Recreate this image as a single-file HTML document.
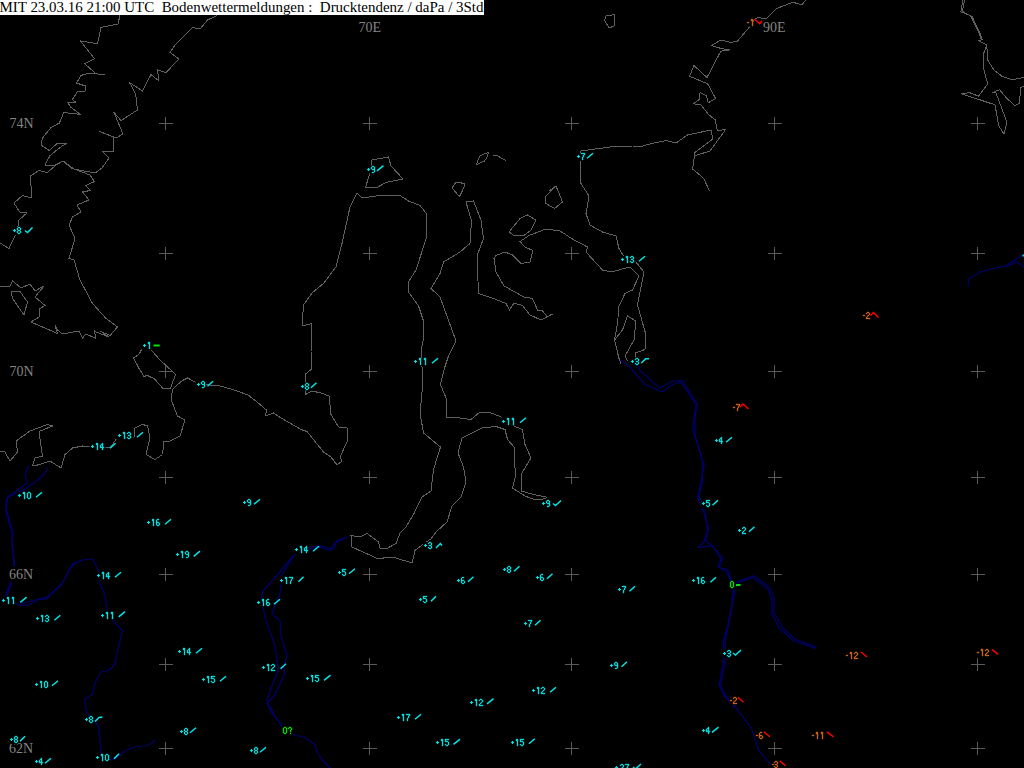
<!DOCTYPE html><html><head><meta charset="utf-8"><style>
html,body{margin:0;padding:0;background:#000;width:1024px;height:768px;overflow:hidden;}
#hdr{position:absolute;left:0;top:0;width:484px;height:15px;background:#fff;color:#000;font-family:"Liberation Serif",serif;font-size:14.96px;line-height:15px;white-space:pre;overflow:hidden;}
#hdr span{position:absolute;left:-0.5px;top:-0.2px;}
svg{position:absolute;left:0;top:0;}
.gl{font-family:"Liberation Serif",serif;font-size:14px;fill:#848484;}
.lb{font-family:"Liberation Sans",sans-serif;font-size:10px;}
</style></head><body>
<svg width="1024" height="768" viewBox="0 0 1024 768">
<defs><path id="g48" d="M1,0h2v1h-2zM0,1h1v1h-1zM3,1h1v1h-1zM0,2h1v1h-1zM3,2h1v1h-1zM0,3h1v1h-1zM3,3h1v1h-1zM0,4h1v1h-1zM3,4h1v1h-1zM0,5h1v1h-1zM3,5h1v1h-1zM1,6h2v1h-2z"/><path id="g49" d="M1,0h2v1h-2zM1,1h2v1h-2zM2,2h1v1h-1zM2,3h1v1h-1zM2,4h1v1h-1zM2,5h1v1h-1zM2,6h1v1h-1z"/><path id="g50" d="M1,0h2v1h-2zM0,1h1v1h-1zM3,1h1v1h-1zM3,2h1v1h-1zM2,3h1v1h-1zM1,4h1v1h-1zM0,5h1v1h-1zM0,6h4v1h-4z"/><path id="g51" d="M1,0h2v1h-2zM0,1h1v1h-1zM3,1h1v1h-1zM3,2h1v1h-1zM1,3h2v1h-2zM3,4h1v1h-1zM0,5h1v1h-1zM3,5h1v1h-1zM1,6h2v1h-2z"/><path id="g52" d="M2,0h1v1h-1zM1,1h2v1h-2zM0,2h1v1h-1zM2,2h1v1h-1zM0,3h1v1h-1zM2,3h1v1h-1zM0,4h4v1h-4zM2,5h1v1h-1zM2,6h1v1h-1z"/><path id="g53" d="M0,0h4v1h-4zM0,1h1v1h-1zM0,2h3v1h-3zM3,3h1v1h-1zM3,4h1v1h-1zM0,5h1v1h-1zM3,5h1v1h-1zM1,6h2v1h-2z"/><path id="g54" d="M1,0h2v1h-2zM0,1h1v1h-1zM0,2h1v1h-1zM0,3h3v1h-3zM0,4h1v1h-1zM3,4h1v1h-1zM0,5h1v1h-1zM3,5h1v1h-1zM1,6h2v1h-2z"/><path id="g55" d="M0,0h4v1h-4zM3,1h1v1h-1zM2,2h1v1h-1zM2,3h1v1h-1zM1,4h1v1h-1zM1,5h1v1h-1zM1,6h1v1h-1z"/><path id="g56" d="M1,0h2v1h-2zM0,1h1v1h-1zM3,1h1v1h-1zM0,2h1v1h-1zM3,2h1v1h-1zM1,3h2v1h-2zM0,4h1v1h-1zM3,4h1v1h-1zM0,5h1v1h-1zM3,5h1v1h-1zM1,6h2v1h-2z"/><path id="g57" d="M1,0h2v1h-2zM0,1h1v1h-1zM3,1h1v1h-1zM0,2h1v1h-1zM3,2h1v1h-1zM1,3h3v1h-3zM3,4h1v1h-1zM3,5h1v1h-1zM1,6h2v1h-2z"/><path id="g63" d="M1,0h2v1h-2zM0,1h1v1h-1zM3,1h1v1h-1zM3,2h1v1h-1zM2,3h1v1h-1zM2,4h1v1h-1zM2,6h1v1h-1z"/><path id="g43" d="M2,2h1v1h-1zM1,3h3v1h-3zM2,4h1v1h-1z"/><path id="g45" d="M0,3h2v1h-2z"/></defs>
<path d="M159,123.5h14M165.5,117v13M159,253.5h14M165.5,247v13M159,371.5h14M165.5,365v13M159,477.5h14M165.5,471v13M159,574.5h14M165.5,568v13M159,664.5h14M165.5,658v13M159,748.5h14M165.5,742v13M363,123.5h14M369.5,117v13M363,253.5h14M369.5,247v13M363,371.5h14M369.5,365v13M363,477.5h14M369.5,471v13M363,574.5h14M369.5,568v13M363,664.5h14M369.5,658v13M363,748.5h14M369.5,742v13M565,123.5h14M571.5,117v13M565,253.5h14M571.5,247v13M565,371.5h14M571.5,365v13M565,477.5h14M571.5,471v13M565,574.5h14M571.5,568v13M565,664.5h14M571.5,658v13M565,748.5h14M571.5,742v13M768,123.5h14M774.5,117v13M768,253.5h14M774.5,247v13M768,371.5h14M774.5,365v13M768,477.5h14M774.5,471v13M768,574.5h14M774.5,568v13M768,664.5h14M774.5,658v13M768,748.5h14M774.5,742v13M971,123.5h14M977.5,117v13M971,253.5h14M977.5,247v13M971,371.5h14M977.5,365v13M971,477.5h14M977.5,471v13M971,574.5h14M977.5,568v13M971,664.5h14M977.5,658v13M971,748.5h14M977.5,742v13" stroke="#5a5a5a" stroke-width="1" fill="none" shape-rendering="crispEdges"/>
<g fill="none" stroke="#00006c" stroke-width="1.25" stroke-linejoin="round">
<polyline points="28.75,465.6 25,474.4 27.5,483 16.25,491 13.75,493 7.5,497 5.6,503.75 6.25,512.5 9.4,523.75 11.9,531 12.5,546 14,565.5 10,584 6,594 3,600"/>
<polyline points="48,467.5 43.75,475 36.25,481 25,489.4 16.25,493 7.5,498 6.25,508.75 10.6,525 13,532.5 11.9,546 15,566 11,585 7,595"/>
<polyline points="15,603 20,605.5 29,605 40,599 46,599 62.5,583 72.5,564 82.5,560 92.5,559 99,572 100,584 105,595.5 107.5,612 114,622 122.5,630.5 116,658 115,664 109,670.5 101,672 95,683 92.5,694 85,699 86,709.5 90,718 99,726 100,742 101,752 105,758 114,759.5 125,751 136,746.5 146,746 152.5,743 154.5,739.5"/>
<polyline points="20,604 47,597 61,585.5 69,570.5 75,563 82.5,560"/>
<polyline points="347,537 335,543 331,549 320,545.5 310,547 295,554 286,568 280,578 281,590.5 276,603 272,614 280,620.5 281,635.5 287,655.5 283.5,668 285,673 276,693 267,704 271,708 275,716 282,726 293.5,734.5 306,738 315,744.5 317,752 322,759.5 330,768"/>
<polyline points="347,537 337,540.5 335,547 330,550.5 318.5,547 296,553 285,565.5 280,572 263.5,590.5 261,599 266,620.5 275,645.5 278.5,670.5 271,688 267,700.5 270,710 276,718 283,727"/>
<polyline points="620,359.5 630,367 637.5,376 645,384.5 662.5,392 672.5,384.5 681,382 696,404.5 692.5,429.5 702.5,459.5 702.5,482 699,496 701,504 705,512 707.5,529.5 704,542 698,547.6 712.3,545.75 722.6,558 719,567.3 728,570 732,581.4 735,591 730,617 725.4,639.5 724.75,665 720.5,685 726,696 736,707.5 751,727.5 754.75,737.5 758.5,750 771,765 774,768"/>
<polyline points="637.5,362 640,370.75 647.5,377 652.5,382 660,388 672.5,381 682.5,380.75 697.5,404.5 695,418 695,434.5 704,466 700,487 697.5,497 703,510 708.5,528 706,541 713.5,547 721,559 718,567 727,572 731,582"/>
<polyline points="731.5,582 733,590 732,605 727.25,628 723.5,640 723,665 719,685 724.5,696 734.5,707.5"/>
<polyline points="735.75,582 753.6,575.75 769.5,587 774,598 774,613 782.6,628 795.75,639.5 816.4,647.4"/>
<polyline points="735.75,583.5 753,577.5 768,589 772,600 772,614 780,629 794,641 816,648.5"/>
<polyline points="968,286 969,278.5 980.5,272 993,268.5 1005.5,266 1022,255.5 1024,255"/>
<polyline points="1005.5,267 1017,262 1024,267"/>
</g>
<g fill="none" stroke="#606060" stroke-width="1" stroke-linejoin="round" shape-rendering="crispEdges">
<polyline points="120,15 118,24 101,27.5 97.5,43.75 80.5,41 94.5,58.75 84.75,63.75 96,73.75 105,74.75"/>
<polyline points="96,73.75 89,73 81,75.5 76.5,83 85.5,86 85,91 77.5,91.5 72.5,99.4 76,102.5 67.5,102.5 71,107.5 80.6,114.4 63.75,112.5 59.4,123 50.6,128 42.5,138 41,145 49.4,150.6 57.5,143 67,143 60,147.5 50,155.6 45,165 55,165 63,161 72.5,168.75 95,173 102,168 109,158 102,151 114,151 113,137 98.75,131 116,138 123,134 113.75,112 121,120.6 137.5,110 135.6,93.75 129.5,82.5 142.5,91 151,74.5 159,81 157.5,70 166,72.5 179,59 170,52.5 175,45 192.5,27.5 200,29 207.5,20 217,15.5"/>
<polyline points="63,161 56,165 47.5,172.5 38.75,170.6 30.6,176 31,186 31,198 22.5,195.5 14,203 19.5,212 27,213 19,220 18,226 15,236 9,248.5 0,243"/>
<polyline points="63,161 74,169 90,175 94.5,181.5 86,185.5 90,190.5 82.5,192 89,200 77,205 81,212 72.5,217 69,225 75,238.5 69,258.5 74,260 80,280 92.5,303.5 106,318.5 117.5,327 110,335.5 101,331.5 109,337 96,332 94,330 96,338.5 86,334 82.5,338 79,331 62.5,334 57.5,330 55,325 57.5,333.5 31,322 39,317 40,308.5 45,305.5 35,297 44,286 35,291 30,284 21,288 12.5,281 10,286 0,286"/>
<polyline points="11,291.5 20,291.5 27.5,302 24,315 12.5,298.5 11,291.5"/>
<polyline points="151,349.75 160,360 175.6,374.4 170.6,388 162.5,388 154.4,378.75 146.25,375 144.4,377 138.75,368 133.5,357.75 138.75,354.75 141.9,349"/>
<polyline points="256,401 248,395 232.5,389.4 220,386 210,385 195,382 187.5,378 181.25,381.25 172.5,389.4 171.25,400 177.5,416 185,420 180,436 170,441 164,441 162.5,454.5 155,459.5 146,454.5 150,438 147.5,425.75 142.5,424.5 135,428 134,437 116,439.5 110,448 82.5,446 72.5,448 65,454.5 61,468 50,461 40,464.5 32.5,466 35,458 42.5,456 39,431.5 52.5,426 47.5,424.5 30,431 16,441 17.5,452 10,461 5,452 0,451"/>
<polyline points="256,401 267,410.5 265,416 273.5,413 281,418 301,429.5 307,431.5 323.5,452 331,457 337,465 342,461 340,457 347,442 347,428 338.5,427 331,414.5 329,396 321,393 312,391 305.5,394.5 305,384.5 305,374.5 311,369.5 311,352 312,323.5 302,326 303.5,305 312,293 323.5,283.5 336,267 342,243.5 350,207 357,193 362,198 376,196 400,195.5 408.5,201 420,205.5 426,213 427,236 416,270 409,281 408.5,292 418.5,306 423.5,321 424,336 421,351 423,382 420,413 423.5,433 440.5,447 433.5,469.5 431,491 422,497 413.5,514.5 406,527 400,533 396,543.5 386,549 380,548 378.5,542 367,533.5 360,537 351,535.5 352,547 378.5,559 386,557.5 396,558 412,563 415,550.5 426,542 431,539 436,532 447,522 452,506 461,497 466,482 463.5,467 458,453 462,438 482,428 496,426.5 505,429.5 507.5,439.5 515,448 514,462 516,474.5 512.5,488 525,496 534,499.5 540,500 547.5,497.5"/>
<polyline points="546,497 534,494.5 521,491 521,474.5 531,458 525,444.5 522.5,429.5 515,426.5 500,416.5 490,412.5 480,412 471,419.5 456,417.5 446,418 446,398 440.5,384.5 444.5,368 448.5,356 456,341 440,297 431,288.5 440,273.5 443.5,262 460,252 470,243.5 471.5,221 466,202 473.5,201 481,220 483.5,238.5 477,256 478.5,293.5 493.5,298.5 506,303.5 509.5,310 514,303 522.5,305.5 530,315 541,320 552.5,314"/>
<polyline points="547.5,317 542.5,311 537.5,310 532.5,298.5 524,297 504,286 496,272 494,258.5 496,255.5 505,252 512.5,255 521,263.5 530,262 533,250.5 525,247 520,241.5 529,235.5 546,229 560,231 574,240 587.5,247 586,252 602.5,270 611,272 630,267 639,276 632.5,290 625,293.5 619,306 617.5,323.5 614.5,340 619,358.5 621,364"/>
<polyline points="614.5,340 622.5,330 627.5,316 636,321 634,340 625,356 627.5,361"/>
<polyline points="372,160 388.5,157 391,166 403,179 386,182.5 376,188 365.5,187.5 370,172.5 372,160"/>
<polyline points="476.3,164.6 479.8,156 483.75,154 488.4,152.5 486.9,157.6 484.5,161 476.3,164.6"/>
<polyline points="492.7,155.2 496.25,155.2 505.6,160.5"/>
<polyline points="452.1,188 456,182.2 464.2,183.4 464.6,186.1 459.5,196.6 452.1,188"/>
<polyline points="509,232 520,218.5 527.5,215 536,220 531,230 524,235.5 514,235.5 509,232"/>
<polyline points="545,197 556,186 562.5,202 554.5,208.5 546,203.5 545,197"/>
<polyline points="606,16 615,14.5 614,26 609,28 604.5,20 606,16"/>
<polyline points="549,191 556,186"/>
<polyline points="635.5,358 635.5,353 645,349.5 646,335 637.5,305 644,272 635,261 625,258.5 619,248.5 616,236 602.5,232 590,225 586,213.5 589,196 581,183.5 580,176 580,160 581,151 610,147 632.5,146 640,147 647.5,144.5 666,140.5 676,143 687.5,135 711,130 713,139 695,152.5 692.5,169 701,176 704,179 709.5,191"/>
<polyline points="694,156 710,151 726,129 717.5,131 715,119.5 709,115 701,105 693.7,103.7 699.3,99.5 700,92.7 706.2,95.4 708.3,102.7 715.6,98.5 707.6,83.75 689.5,76.25 694,65.6 707,77.5 720.75,51.25 729.5,50 722,48.75 711.4,45.6 720.75,40 730.75,42.5 737.6,41 749.5,27 754.5,19.4 758,17.5 766,18.75 776,8.75 793,2.25 802,5 805.5,0"/>
<polyline points="963,0 960.8,11.8 964,13 970.4,15.5 978.6,31.9 981.4,40 978.6,40.5 986.8,45.2 983.2,54.7 983.2,67.4 987.7,83.8 978.6,96.2 969.5,92.6 961.3,93.8 971.3,97 995,104.8 998.7,125.7 1004,134 1006.9,122 996,93 992.3,92.6 999.6,89.7 1006.9,98.4 1015,105.7 1019.6,103 1020.5,87.5 1024,86.6"/>
<polyline points="964.5,0 962.5,11 966,13.5 972,16.5 980,33 982.5,40"/>
<polyline points="986.8,45.2 987.7,60 994,70 1002.3,76.5 1012.3,79.8 1024,77.4"/>
</g>
<rect x="9.0" y="115.5" width="25" height="15.5" fill="#000"/>
<text class="gl" x="9.5" y="128">74N</text>
<rect x="9.0" y="363.5" width="25" height="15.5" fill="#000"/>
<text class="gl" x="9.5" y="376">70N</text>
<rect x="8.5" y="566.5" width="25" height="15.5" fill="#000"/>
<text class="gl" x="9" y="579">66N</text>
<rect x="8.5" y="740.5" width="25" height="15.5" fill="#000"/>
<text class="gl" x="9" y="753">62N</text>
<rect x="358.0" y="19.5" width="25" height="15.5" fill="#000"/>
<text class="gl" x="358.5" y="32">70E</text>
<rect x="762.5" y="19.5" width="25" height="15.5" fill="#000"/>
<text class="gl" x="763" y="32">90E</text>
<rect x="12.0" y="227" width="11.0" height="8" fill="#000"/>
<use href="#g43" x="12" y="227" fill="#00e0e0" stroke="#00e0e0" stroke-width="0.15"/>
<use href="#g56" x="17" y="227" fill="#00e0e0" stroke="#00e0e0" stroke-width="0.35"/>
<path d="M25,230.5 L27.5,232.5 L32.5,227.5" stroke="#00e8e8" stroke-width="1.5" fill="none"/>
<rect x="141.5" y="341.5" width="9.5" height="8" fill="#000"/>
<use href="#g43" x="142" y="342" fill="#00e0e0" stroke="#00e0e0" stroke-width="0.15"/>
<use href="#g49" x="147" y="342" fill="#00e0e0" stroke="#00e0e0" stroke-width="0.35"/>
<path d="M153.5,345.5 L159.75,345.5" stroke="#00e000" stroke-width="2" fill="none"/>
<rect x="195.5" y="381" width="10.599999999999994" height="8" fill="#000"/>
<use href="#g43" x="196" y="381" fill="#00e0e0" stroke="#00e0e0" stroke-width="0.15"/>
<use href="#g57" x="201" y="381" fill="#00e0e0" stroke="#00e0e0" stroke-width="0.35"/>
<path d="M207.5,386.3 L213,381.2" stroke="#00e8e8" stroke-width="1.5" fill="none"/>
<rect x="116.5" y="432" width="17" height="8" fill="#000"/>
<use href="#g43" x="117" y="432" fill="#00e0e0" stroke="#00e0e0" stroke-width="0.15"/>
<use href="#g49" x="122" y="432" fill="#00e0e0" stroke="#00e0e0" stroke-width="0.35"/>
<use href="#g51" x="127" y="432" fill="#00e0e0" stroke="#00e0e0" stroke-width="0.35"/>
<path d="M137,437.3 L143,432.2" stroke="#00e8e8" stroke-width="1.5" fill="none"/>
<rect x="89.5" y="443" width="16" height="8" fill="#000"/>
<use href="#g43" x="90" y="443" fill="#00e0e0" stroke="#00e0e0" stroke-width="0.15"/>
<use href="#g49" x="95" y="443" fill="#00e0e0" stroke="#00e0e0" stroke-width="0.35"/>
<use href="#g52" x="100" y="443" fill="#00e0e0" stroke="#00e0e0" stroke-width="0.35"/>
<path d="M110,448.3 L115.5,443.2" stroke="#00e8e8" stroke-width="1.5" fill="none"/>
<rect x="16.5" y="492" width="15" height="8" fill="#000"/>
<use href="#g43" x="17" y="492" fill="#00e0e0" stroke="#00e0e0" stroke-width="0.15"/>
<use href="#g49" x="22" y="492" fill="#00e0e0" stroke="#00e0e0" stroke-width="0.35"/>
<use href="#g48" x="27" y="492" fill="#00e0e0" stroke="#00e0e0" stroke-width="0.35"/>
<path d="M36,497.3 L42,492.2" stroke="#00e8e8" stroke-width="1.5" fill="none"/>
<rect x="241.5" y="499" width="11" height="8" fill="#000"/>
<use href="#g43" x="242" y="499" fill="#00e0e0" stroke="#00e0e0" stroke-width="0.15"/>
<use href="#g57" x="247" y="499" fill="#00e0e0" stroke="#00e0e0" stroke-width="0.35"/>
<path d="M254,504.3 L260,499.2" stroke="#00e8e8" stroke-width="1.5" fill="none"/>
<rect x="145.5" y="519" width="15" height="8" fill="#000"/>
<use href="#g43" x="146" y="519" fill="#00e0e0" stroke="#00e0e0" stroke-width="0.15"/>
<use href="#g49" x="151" y="519" fill="#00e0e0" stroke="#00e0e0" stroke-width="0.35"/>
<use href="#g54" x="156" y="519" fill="#00e0e0" stroke="#00e0e0" stroke-width="0.35"/>
<path d="M165,524.3 L171,519.2" stroke="#00e8e8" stroke-width="1.5" fill="none"/>
<rect x="174.5" y="551" width="15" height="8" fill="#000"/>
<use href="#g43" x="175" y="551" fill="#00e0e0" stroke="#00e0e0" stroke-width="0.15"/>
<use href="#g49" x="180" y="551" fill="#00e0e0" stroke="#00e0e0" stroke-width="0.35"/>
<use href="#g57" x="185" y="551" fill="#00e0e0" stroke="#00e0e0" stroke-width="0.35"/>
<path d="M193.75,556.3 L200,551.2" stroke="#00e8e8" stroke-width="1.5" fill="none"/>
<rect x="95.5" y="572" width="15" height="8" fill="#000"/>
<use href="#g43" x="96" y="572" fill="#00e0e0" stroke="#00e0e0" stroke-width="0.15"/>
<use href="#g49" x="101" y="572" fill="#00e0e0" stroke="#00e0e0" stroke-width="0.35"/>
<use href="#g52" x="106" y="572" fill="#00e0e0" stroke="#00e0e0" stroke-width="0.35"/>
<path d="M115,577.3 L121,572.2" stroke="#00e8e8" stroke-width="1.5" fill="none"/>
<rect x="1.0" y="597" width="13.9" height="8" fill="#000"/>
<use href="#g43" x="1" y="597" fill="#00e0e0" stroke="#00e0e0" stroke-width="0.15"/>
<use href="#g49" x="6" y="597" fill="#00e0e0" stroke="#00e0e0" stroke-width="0.35"/>
<use href="#g49" x="11" y="597" fill="#00e0e0" stroke="#00e0e0" stroke-width="0.35"/>
<path d="M20.3,602.3 L26.6,597.2" stroke="#00e8e8" stroke-width="1.5" fill="none"/>
<rect x="35.1" y="615" width="15.399999999999999" height="8" fill="#000"/>
<use href="#g43" x="35" y="615" fill="#00e0e0" stroke="#00e0e0" stroke-width="0.15"/>
<use href="#g49" x="40" y="615" fill="#00e0e0" stroke="#00e0e0" stroke-width="0.35"/>
<use href="#g51" x="45" y="615" fill="#00e0e0" stroke="#00e0e0" stroke-width="0.35"/>
<path d="M54.4,620.3 L60.3,615.2" stroke="#00e8e8" stroke-width="1.5" fill="none"/>
<rect x="99.5" y="611.5" width="15" height="8" fill="#000"/>
<use href="#g43" x="100" y="612" fill="#00e0e0" stroke="#00e0e0" stroke-width="0.15"/>
<use href="#g49" x="105" y="612" fill="#00e0e0" stroke="#00e0e0" stroke-width="0.35"/>
<use href="#g49" x="110" y="612" fill="#00e0e0" stroke="#00e0e0" stroke-width="0.35"/>
<path d="M118.75,616.8 L125,611.7" stroke="#00e8e8" stroke-width="1.5" fill="none"/>
<rect x="176.5" y="648" width="15" height="8" fill="#000"/>
<use href="#g43" x="177" y="648" fill="#00e0e0" stroke="#00e0e0" stroke-width="0.15"/>
<use href="#g49" x="182" y="648" fill="#00e0e0" stroke="#00e0e0" stroke-width="0.35"/>
<use href="#g52" x="187" y="648" fill="#00e0e0" stroke="#00e0e0" stroke-width="0.35"/>
<path d="M196,653.3 L202,648.2" stroke="#00e8e8" stroke-width="1.5" fill="none"/>
<rect x="200.5" y="676" width="15" height="8" fill="#000"/>
<use href="#g43" x="201" y="676" fill="#00e0e0" stroke="#00e0e0" stroke-width="0.15"/>
<use href="#g49" x="206" y="676" fill="#00e0e0" stroke="#00e0e0" stroke-width="0.35"/>
<use href="#g53" x="211" y="676" fill="#00e0e0" stroke="#00e0e0" stroke-width="0.35"/>
<path d="M220,681.3 L226,676.2" stroke="#00e8e8" stroke-width="1.5" fill="none"/>
<rect x="33.5" y="680.5" width="14.5" height="8" fill="#000"/>
<use href="#g43" x="34" y="681" fill="#00e0e0" stroke="#00e0e0" stroke-width="0.15"/>
<use href="#g49" x="39" y="681" fill="#00e0e0" stroke="#00e0e0" stroke-width="0.35"/>
<use href="#g48" x="44" y="681" fill="#00e0e0" stroke="#00e0e0" stroke-width="0.35"/>
<path d="M52,685.8 L58,680.7" stroke="#00e8e8" stroke-width="1.5" fill="none"/>
<rect x="83.5" y="716" width="11" height="8" fill="#000"/>
<use href="#g43" x="84" y="716" fill="#00e0e0" stroke="#00e0e0" stroke-width="0.15"/>
<use href="#g56" x="89" y="716" fill="#00e0e0" stroke="#00e0e0" stroke-width="0.35"/>
<path d="M95,721.5 L99.35,717.3 L102.5,717.3" stroke="#00e8e8" stroke-width="1.5" fill="none"/>
<rect x="8.5" y="736" width="9.5" height="8" fill="#000"/>
<use href="#g43" x="9" y="736" fill="#00e0e0" stroke="#00e0e0" stroke-width="0.15"/>
<use href="#g56" x="14" y="736" fill="#00e0e0" stroke="#00e0e0" stroke-width="0.35"/>
<path d="M20,741.3 L25,736.2" stroke="#00e8e8" stroke-width="1.5" fill="none"/>
<rect x="33.5" y="758" width="9.5" height="8" fill="#000"/>
<use href="#g43" x="34" y="758" fill="#00e0e0" stroke="#00e0e0" stroke-width="0.15"/>
<use href="#g52" x="39" y="758" fill="#00e0e0" stroke="#00e0e0" stroke-width="0.35"/>
<path d="M45,763.3 L51,758.2" stroke="#00e8e8" stroke-width="1.5" fill="none"/>
<rect x="94.5" y="753.5" width="15" height="8" fill="#000"/>
<use href="#g43" x="95" y="754" fill="#00e0e0" stroke="#00e0e0" stroke-width="0.15"/>
<use href="#g49" x="100" y="754" fill="#00e0e0" stroke="#00e0e0" stroke-width="0.35"/>
<use href="#g48" x="105" y="754" fill="#00e0e0" stroke="#00e0e0" stroke-width="0.35"/>
<path d="M114,758.8 L119,753.7" stroke="#00e8e8" stroke-width="1.5" fill="none"/>
<rect x="178.5" y="727.5" width="9.5" height="8" fill="#000"/>
<use href="#g43" x="179" y="728" fill="#00e0e0" stroke="#00e0e0" stroke-width="0.15"/>
<use href="#g56" x="184" y="728" fill="#00e0e0" stroke="#00e0e0" stroke-width="0.35"/>
<path d="M190,732.8 L196,727.7" stroke="#00e8e8" stroke-width="1.5" fill="none"/>
<rect x="248.5" y="747" width="10" height="8" fill="#000"/>
<use href="#g43" x="249" y="747" fill="#00e0e0" stroke="#00e0e0" stroke-width="0.15"/>
<use href="#g56" x="254" y="747" fill="#00e0e0" stroke="#00e0e0" stroke-width="0.35"/>
<path d="M260,752.3 L266,747.2" stroke="#00e8e8" stroke-width="1.5" fill="none"/>
<rect x="365.5" y="165.5" width="10" height="8" fill="#000"/>
<use href="#g43" x="366" y="166" fill="#00e0e0" stroke="#00e0e0" stroke-width="0.15"/>
<use href="#g57" x="371" y="166" fill="#00e0e0" stroke="#00e0e0" stroke-width="0.35"/>
<path d="M377,170.8 L383.5,165.7" stroke="#00e8e8" stroke-width="1.5" fill="none"/>
<rect x="412.5" y="358" width="14" height="8" fill="#000"/>
<use href="#g43" x="413" y="358" fill="#00e0e0" stroke="#00e0e0" stroke-width="0.15"/>
<use href="#g49" x="418" y="358" fill="#00e0e0" stroke="#00e0e0" stroke-width="0.35"/>
<use href="#g49" x="423" y="358" fill="#00e0e0" stroke="#00e0e0" stroke-width="0.35"/>
<path d="M432,363.3 L438,358.2" stroke="#00e8e8" stroke-width="1.5" fill="none"/>
<rect x="299.5" y="382.5" width="9.5" height="8" fill="#000"/>
<use href="#g43" x="300" y="383" fill="#00e0e0" stroke="#00e0e0" stroke-width="0.15"/>
<use href="#g56" x="305" y="383" fill="#00e0e0" stroke="#00e0e0" stroke-width="0.35"/>
<path d="M311,387.8 L316.5,382.7" stroke="#00e8e8" stroke-width="1.5" fill="none"/>
<rect x="500.5" y="417.5" width="15" height="8" fill="#000"/>
<use href="#g43" x="501" y="418" fill="#00e0e0" stroke="#00e0e0" stroke-width="0.15"/>
<use href="#g49" x="506" y="418" fill="#00e0e0" stroke="#00e0e0" stroke-width="0.35"/>
<use href="#g49" x="511" y="418" fill="#00e0e0" stroke="#00e0e0" stroke-width="0.35"/>
<path d="M520,422.8 L526,417.7" stroke="#00e8e8" stroke-width="1.5" fill="none"/>
<rect x="423.0" y="542" width="9.5" height="8" fill="#000"/>
<use href="#g43" x="423" y="542" fill="#00e0e0" stroke="#00e0e0" stroke-width="0.15"/>
<use href="#g51" x="428" y="542" fill="#00e0e0" stroke="#00e0e0" stroke-width="0.35"/>
<path d="M436,548 L440.32,543.5 L442,545.5" stroke="#00e8e8" stroke-width="1.5" fill="none"/>
<rect x="293.9" y="546" width="14.400000000000034" height="8" fill="#000"/>
<use href="#g43" x="294" y="546" fill="#00e0e0" stroke="#00e0e0" stroke-width="0.15"/>
<use href="#g49" x="299" y="546" fill="#00e0e0" stroke="#00e0e0" stroke-width="0.35"/>
<use href="#g52" x="304" y="546" fill="#00e0e0" stroke="#00e0e0" stroke-width="0.35"/>
<path d="M313,551.3 L319,546.2" stroke="#00e8e8" stroke-width="1.5" fill="none"/>
<rect x="278.5" y="576.5" width="15.5" height="8" fill="#000"/>
<use href="#g43" x="279" y="577" fill="#00e0e0" stroke="#00e0e0" stroke-width="0.15"/>
<use href="#g49" x="284" y="577" fill="#00e0e0" stroke="#00e0e0" stroke-width="0.35"/>
<use href="#g55" x="289" y="577" fill="#00e0e0" stroke="#00e0e0" stroke-width="0.35"/>
<path d="M298.5,581.8 L303.5,576.7" stroke="#00e8e8" stroke-width="1.5" fill="none"/>
<rect x="255.5" y="599" width="15" height="8" fill="#000"/>
<use href="#g43" x="256" y="599" fill="#00e0e0" stroke="#00e0e0" stroke-width="0.15"/>
<use href="#g49" x="261" y="599" fill="#00e0e0" stroke="#00e0e0" stroke-width="0.35"/>
<use href="#g54" x="266" y="599" fill="#00e0e0" stroke="#00e0e0" stroke-width="0.35"/>
<path d="M274,604.3 L280,599.2" stroke="#00e8e8" stroke-width="1.5" fill="none"/>
<rect x="336.5" y="568.5" width="10" height="8" fill="#000"/>
<use href="#g43" x="337" y="569" fill="#00e0e0" stroke="#00e0e0" stroke-width="0.15"/>
<use href="#g53" x="342" y="569" fill="#00e0e0" stroke="#00e0e0" stroke-width="0.35"/>
<path d="M349,573.8 L355,568.7" stroke="#00e8e8" stroke-width="1.5" fill="none"/>
<rect x="455.5" y="576.5" width="10" height="8" fill="#000"/>
<use href="#g43" x="456" y="577" fill="#00e0e0" stroke="#00e0e0" stroke-width="0.15"/>
<use href="#g54" x="461" y="577" fill="#00e0e0" stroke="#00e0e0" stroke-width="0.35"/>
<path d="M468,581.8 L473.5,576.7" stroke="#00e8e8" stroke-width="1.5" fill="none"/>
<rect x="418.0" y="596" width="11.0" height="8" fill="#000"/>
<use href="#g43" x="418" y="596" fill="#00e0e0" stroke="#00e0e0" stroke-width="0.15"/>
<use href="#g53" x="423" y="596" fill="#00e0e0" stroke="#00e0e0" stroke-width="0.35"/>
<path d="M431,601.3 L436,596.2" stroke="#00e8e8" stroke-width="1.5" fill="none"/>
<rect x="501.5" y="566" width="10" height="8" fill="#000"/>
<use href="#g43" x="502" y="566" fill="#00e0e0" stroke="#00e0e0" stroke-width="0.15"/>
<use href="#g56" x="507" y="566" fill="#00e0e0" stroke="#00e0e0" stroke-width="0.35"/>
<path d="M514,571.3 L519.5,566.2" stroke="#00e8e8" stroke-width="1.5" fill="none"/>
<rect x="260.5" y="663.5" width="15.5" height="8" fill="#000"/>
<use href="#g43" x="261" y="664" fill="#00e0e0" stroke="#00e0e0" stroke-width="0.15"/>
<use href="#g49" x="266" y="664" fill="#00e0e0" stroke="#00e0e0" stroke-width="0.35"/>
<use href="#g50" x="271" y="664" fill="#00e0e0" stroke="#00e0e0" stroke-width="0.35"/>
<path d="M280.5,668.8 L286,663.7" stroke="#00e8e8" stroke-width="1.5" fill="none"/>
<rect x="305.0" y="675" width="15.5" height="8" fill="#000"/>
<use href="#g43" x="305" y="675" fill="#00e0e0" stroke="#00e0e0" stroke-width="0.15"/>
<use href="#g49" x="310" y="675" fill="#00e0e0" stroke="#00e0e0" stroke-width="0.35"/>
<use href="#g53" x="315" y="675" fill="#00e0e0" stroke="#00e0e0" stroke-width="0.35"/>
<path d="M324,680.3 L330.5,675.2" stroke="#00e8e8" stroke-width="1.5" fill="none"/>
<rect x="468.5" y="698.5" width="15.5" height="8" fill="#000"/>
<use href="#g43" x="469" y="699" fill="#00e0e0" stroke="#00e0e0" stroke-width="0.15"/>
<use href="#g49" x="474" y="699" fill="#00e0e0" stroke="#00e0e0" stroke-width="0.35"/>
<use href="#g50" x="479" y="699" fill="#00e0e0" stroke="#00e0e0" stroke-width="0.35"/>
<path d="M487,703.8 L493.5,698.7" stroke="#00e8e8" stroke-width="1.5" fill="none"/>
<rect x="395.5" y="714" width="15" height="8" fill="#000"/>
<use href="#g43" x="396" y="714" fill="#00e0e0" stroke="#00e0e0" stroke-width="0.15"/>
<use href="#g49" x="401" y="714" fill="#00e0e0" stroke="#00e0e0" stroke-width="0.35"/>
<use href="#g55" x="406" y="714" fill="#00e0e0" stroke="#00e0e0" stroke-width="0.35"/>
<path d="M415,719.3 L421,714.2" stroke="#00e8e8" stroke-width="1.5" fill="none"/>
<rect x="434.5" y="739" width="15" height="8" fill="#000"/>
<use href="#g43" x="435" y="739" fill="#00e0e0" stroke="#00e0e0" stroke-width="0.15"/>
<use href="#g49" x="440" y="739" fill="#00e0e0" stroke="#00e0e0" stroke-width="0.35"/>
<use href="#g53" x="445" y="739" fill="#00e0e0" stroke="#00e0e0" stroke-width="0.35"/>
<path d="M453.5,744.3 L460,739.2" stroke="#00e8e8" stroke-width="1.5" fill="none"/>
<rect x="509.5" y="738.5" width="14.799999999999955" height="8" fill="#000"/>
<use href="#g43" x="510" y="739" fill="#00e0e0" stroke="#00e0e0" stroke-width="0.15"/>
<use href="#g49" x="515" y="739" fill="#00e0e0" stroke="#00e0e0" stroke-width="0.35"/>
<use href="#g53" x="520" y="739" fill="#00e0e0" stroke="#00e0e0" stroke-width="0.35"/>
<path d="M528.9,743.8 L534.8,738.7" stroke="#00e8e8" stroke-width="1.5" fill="none"/>
<rect x="575.5" y="153" width="10" height="8" fill="#000"/>
<use href="#g43" x="576" y="153" fill="#00e0e0" stroke="#00e0e0" stroke-width="0.15"/>
<use href="#g55" x="581" y="153" fill="#00e0e0" stroke="#00e0e0" stroke-width="0.35"/>
<path d="M587,158.3 L593,153.2" stroke="#00e8e8" stroke-width="1.5" fill="none"/>
<rect x="619.5" y="256" width="16" height="8" fill="#000"/>
<use href="#g43" x="620" y="256" fill="#00e0e0" stroke="#00e0e0" stroke-width="0.15"/>
<use href="#g49" x="625" y="256" fill="#00e0e0" stroke="#00e0e0" stroke-width="0.35"/>
<use href="#g51" x="630" y="256" fill="#00e0e0" stroke="#00e0e0" stroke-width="0.35"/>
<path d="M639,261.3 L645,256.2" stroke="#00e8e8" stroke-width="1.5" fill="none"/>
<rect x="629.5" y="357.5" width="11" height="8" fill="#000"/>
<use href="#g43" x="630" y="358" fill="#00e0e0" stroke="#00e0e0" stroke-width="0.15"/>
<use href="#g51" x="635" y="358" fill="#00e0e0" stroke="#00e0e0" stroke-width="0.35"/>
<path d="M641.3,363.0 L645.766,358.8 L649,358.8" stroke="#00e8e8" stroke-width="1.5" fill="none"/>
<rect x="540.8" y="500" width="10.700000000000045" height="8" fill="#000"/>
<use href="#g43" x="541" y="500" fill="#00e0e0" stroke="#00e0e0" stroke-width="0.15"/>
<use href="#g57" x="546" y="500" fill="#00e0e0" stroke="#00e0e0" stroke-width="0.35"/>
<path d="M553,503.5 L555.5,505.5 L561,500.5" stroke="#00e8e8" stroke-width="1.5" fill="none"/>
<rect x="700.5" y="500" width="10" height="8" fill="#000"/>
<use href="#g43" x="701" y="500" fill="#00e0e0" stroke="#00e0e0" stroke-width="0.15"/>
<use href="#g53" x="706" y="500" fill="#00e0e0" stroke="#00e0e0" stroke-width="0.35"/>
<path d="M712.5,505.3 L718,500.2" stroke="#00e8e8" stroke-width="1.5" fill="none"/>
<rect x="714.0" y="437" width="10.5" height="8" fill="#000"/>
<use href="#g43" x="714" y="437" fill="#00e0e0" stroke="#00e0e0" stroke-width="0.15"/>
<use href="#g52" x="719" y="437" fill="#00e0e0" stroke="#00e0e0" stroke-width="0.35"/>
<path d="M726,442.3 L732,437.2" stroke="#00e8e8" stroke-width="1.5" fill="none"/>
<rect x="534.5" y="573.5" width="10.5" height="8" fill="#000"/>
<use href="#g43" x="535" y="574" fill="#00e0e0" stroke="#00e0e0" stroke-width="0.15"/>
<use href="#g54" x="540" y="574" fill="#00e0e0" stroke="#00e0e0" stroke-width="0.35"/>
<path d="M547,578.8 L552.5,573.7" stroke="#00e8e8" stroke-width="1.5" fill="none"/>
<rect x="617.0" y="586" width="11.0" height="8" fill="#000"/>
<use href="#g43" x="617" y="586" fill="#00e0e0" stroke="#00e0e0" stroke-width="0.15"/>
<use href="#g55" x="622" y="586" fill="#00e0e0" stroke="#00e0e0" stroke-width="0.35"/>
<path d="M629.5,591.3 L635,586.2" stroke="#00e8e8" stroke-width="1.5" fill="none"/>
<rect x="522.5" y="620" width="11" height="8" fill="#000"/>
<use href="#g43" x="523" y="620" fill="#00e0e0" stroke="#00e0e0" stroke-width="0.15"/>
<use href="#g55" x="528" y="620" fill="#00e0e0" stroke="#00e0e0" stroke-width="0.35"/>
<path d="M535,625.3 L540.5,620.2" stroke="#00e8e8" stroke-width="1.5" fill="none"/>
<rect x="691.2" y="577" width="14.099999999999909" height="8" fill="#000"/>
<use href="#g43" x="691" y="577" fill="#00e0e0" stroke="#00e0e0" stroke-width="0.15"/>
<use href="#g49" x="696" y="577" fill="#00e0e0" stroke="#00e0e0" stroke-width="0.35"/>
<use href="#g54" x="701" y="577" fill="#00e0e0" stroke="#00e0e0" stroke-width="0.35"/>
<path d="M710.4,582.3 L716,577.2" stroke="#00e8e8" stroke-width="1.5" fill="none"/>
<rect x="722.1" y="649.5" width="9.399999999999977" height="8" fill="#000"/>
<use href="#g43" x="722" y="650" fill="#00e0e0" stroke="#00e0e0" stroke-width="0.15"/>
<use href="#g51" x="727" y="650" fill="#00e0e0" stroke="#00e0e0" stroke-width="0.35"/>
<path d="M733,653.0 L735.5,655.0 L741,650.0" stroke="#00e8e8" stroke-width="1.5" fill="none"/>
<rect x="609.0" y="661.5" width="11.5" height="8" fill="#000"/>
<use href="#g43" x="609" y="662" fill="#00e0e0" stroke="#00e0e0" stroke-width="0.15"/>
<use href="#g57" x="614" y="662" fill="#00e0e0" stroke="#00e0e0" stroke-width="0.35"/>
<path d="M621.5,666.8 L627,661.7" stroke="#00e8e8" stroke-width="1.5" fill="none"/>
<rect x="530.5" y="687" width="15.5" height="8" fill="#000"/>
<use href="#g43" x="531" y="687" fill="#00e0e0" stroke="#00e0e0" stroke-width="0.15"/>
<use href="#g49" x="536" y="687" fill="#00e0e0" stroke="#00e0e0" stroke-width="0.35"/>
<use href="#g50" x="541" y="687" fill="#00e0e0" stroke="#00e0e0" stroke-width="0.35"/>
<path d="M550,692.3 L556,687.2" stroke="#00e8e8" stroke-width="1.5" fill="none"/>
<rect x="737.1" y="526.5" width="9.399999999999977" height="8" fill="#000"/>
<use href="#g43" x="737" y="527" fill="#00e0e0" stroke="#00e0e0" stroke-width="0.15"/>
<use href="#g50" x="742" y="527" fill="#00e0e0" stroke="#00e0e0" stroke-width="0.35"/>
<path d="M749,531.8 L754.5,526.7" stroke="#00e8e8" stroke-width="1.5" fill="none"/>
<rect x="700.5" y="727" width="11" height="8" fill="#000"/>
<use href="#g43" x="701" y="727" fill="#00e0e0" stroke="#00e0e0" stroke-width="0.15"/>
<use href="#g52" x="706" y="727" fill="#00e0e0" stroke="#00e0e0" stroke-width="0.35"/>
<path d="M712,732.3 L718.5,727.2" stroke="#00e8e8" stroke-width="1.5" fill="none"/>
<rect x="614.25" y="763.5" width="14.75" height="8" fill="#000"/>
<use href="#g43" x="614" y="764" fill="#00e0e0" stroke="#00e0e0" stroke-width="0.15"/>
<use href="#g50" x="620" y="764" fill="#00e0e0" stroke="#00e0e0" stroke-width="0.35"/>
<use href="#g55" x="625" y="764" fill="#00e0e0" stroke="#00e0e0" stroke-width="0.35"/>
<path d="M633,767.0 L635.5,769.0 L641,764.0" stroke="#00e8e8" stroke-width="1.5" fill="none"/>
<rect x="729.5" y="581" width="7" height="8" fill="#000"/>
<use href="#g48" x="730" y="581" fill="#00e000" stroke="#00e000" stroke-width="0.35"/>
<path d="M736,585 L740.5,585" stroke="#00e000" stroke-width="2" fill="none"/>
<rect x="282.5" y="726.5" width="11" height="8" fill="#000"/>
<use href="#g48" x="283" y="727" fill="#00e000" stroke="#00e000" stroke-width="0.35"/>
<use href="#g63" x="288" y="727" fill="#00e000" stroke="#00e000" stroke-width="0.35"/>
<rect x="746.25" y="18.5" width="6.850000000000023" height="8" fill="#000"/>
<use href="#g45" x="747" y="19" fill="#cc6614" stroke="#cc6614" stroke-width="0.35"/>
<use href="#g49" x="750" y="19" fill="#cc6614" stroke="#cc6614" stroke-width="0.35"/>
<path d="M754.5,19.2 L759.75,23.6 L762,21.0" stroke="#ff0000" stroke-width="1.5" fill="none"/>
<rect x="862.5" y="312" width="8.5" height="8" fill="#000"/>
<use href="#g45" x="863" y="312" fill="#cc6614" stroke="#cc6614" stroke-width="0.35"/>
<use href="#g50" x="866" y="312" fill="#cc6614" stroke="#cc6614" stroke-width="0.35"/>
<path d="M870.5,315.5 L873.5,312.5 L878.5,317.5" stroke="#ff0000" stroke-width="1.5" fill="none"/>
<rect x="732.5" y="403.5" width="8" height="8" fill="#000"/>
<use href="#g45" x="733" y="404" fill="#cc6614" stroke="#cc6614" stroke-width="0.35"/>
<use href="#g55" x="736" y="404" fill="#cc6614" stroke="#cc6614" stroke-width="0.35"/>
<path d="M740,407.0 L743,404.0 L748.5,409.0" stroke="#ff0000" stroke-width="1.5" fill="none"/>
<rect x="845.5" y="651.7" width="13" height="8" fill="#000"/>
<use href="#g45" x="846" y="652" fill="#cc6614" stroke="#cc6614" stroke-width="0.35"/>
<use href="#g49" x="849" y="652" fill="#cc6614" stroke="#cc6614" stroke-width="0.35"/>
<use href="#g50" x="854" y="652" fill="#cc6614" stroke="#cc6614" stroke-width="0.35"/>
<path d="M861,652.0 L867,657.0" stroke="#ff0000" stroke-width="1.5" fill="none"/>
<rect x="976.5" y="649" width="13.5" height="8" fill="#000"/>
<use href="#g45" x="977" y="649" fill="#cc6614" stroke="#cc6614" stroke-width="0.35"/>
<use href="#g49" x="980" y="649" fill="#cc6614" stroke="#cc6614" stroke-width="0.35"/>
<use href="#g50" x="985" y="649" fill="#cc6614" stroke="#cc6614" stroke-width="0.35"/>
<path d="M992,649.3 L998,654.3" stroke="#ff0000" stroke-width="1.5" fill="none"/>
<rect x="811.2" y="731.5" width="12.699999999999932" height="8" fill="#000"/>
<use href="#g45" x="812" y="732" fill="#cc6614" stroke="#cc6614" stroke-width="0.35"/>
<use href="#g49" x="815" y="732" fill="#cc6614" stroke="#cc6614" stroke-width="0.35"/>
<use href="#g49" x="820" y="732" fill="#cc6614" stroke="#cc6614" stroke-width="0.35"/>
<path d="M827,731.8 L833.6,736.8" stroke="#ff0000" stroke-width="1.5" fill="none"/>
<rect x="771.0" y="760.5" width="8.5" height="8" fill="#000"/>
<use href="#g45" x="772" y="761" fill="#cc6614" stroke="#cc6614" stroke-width="0.35"/>
<use href="#g51" x="774" y="761" fill="#cc6614" stroke="#cc6614" stroke-width="0.35"/>
<path d="M779.7,760.8 L785.5,765.8" stroke="#ff0000" stroke-width="1.5" fill="none"/>
<rect x="729.5" y="697" width="8" height="8" fill="#000"/>
<use href="#g45" x="730" y="697" fill="#cc6614" stroke="#cc6614" stroke-width="0.35"/>
<use href="#g50" x="733" y="697" fill="#cc6614" stroke="#cc6614" stroke-width="0.35"/>
<path d="M738,697.3 L743.5,702.3" stroke="#ff0000" stroke-width="1.5" fill="none"/>
<rect x="755.5" y="731.5" width="8.5" height="8" fill="#000"/>
<use href="#g45" x="756" y="732" fill="#cc6614" stroke="#cc6614" stroke-width="0.35"/>
<use href="#g54" x="759" y="732" fill="#cc6614" stroke="#cc6614" stroke-width="0.35"/>
<path d="M764,731.8 L769.75,736.8" stroke="#ff0000" stroke-width="1.5" fill="none"/>
<rect x="1022.5" y="254.5" width="1.5" height="2" fill="#00e0e0"/>
</svg>
<div id="hdr"><span>MIT 23.03.16 21:00 UTC  Bodenwettermeldungen :  Drucktendenz / daPa / 3Std</span></div>
</body></html>
